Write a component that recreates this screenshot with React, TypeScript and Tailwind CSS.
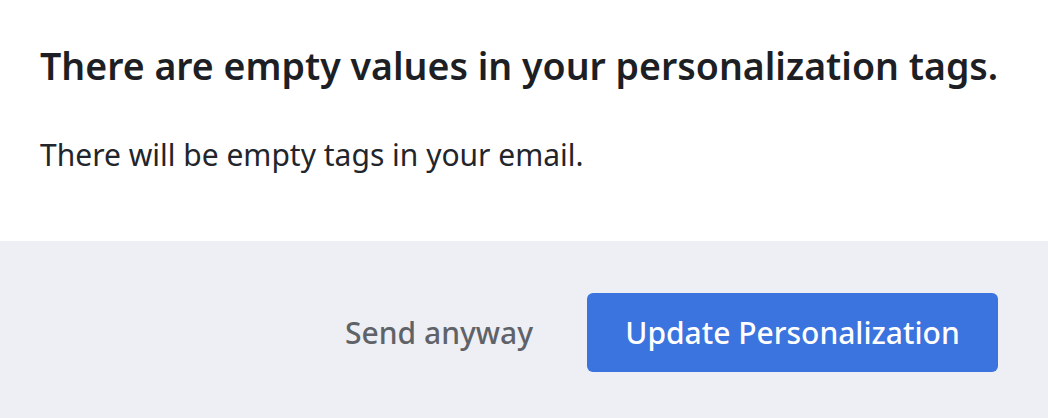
export default function App() {
  return (
    <div className="w-[1048px] h-[418px] bg-white flex flex-col font-['Noto_Sans',sans-serif]">
      <div className="h-[241px] px-10 pt-[40px]">
        <h2 className="whitespace-nowrap text-[37.5px] leading-[52px] font-semibold text-[#1d1f24]">
          There are empty values in your personalization tags.
        </h2>
        <p className="mt-[43px] text-[30px] leading-[40px] text-[#22252b]">
          There will be empty tags in your email.
        </p>
      </div>
      <div className="flex-1 bg-[#eeeff4] flex items-start justify-end gap-[54px] pr-[50px] pt-[52px]">
        <button className="h-[79px] text-[30px] font-medium text-[#5f6368]">Send anyway</button>
        <button className="h-[79px] w-[411px] rounded-[6px] bg-[#3b73df] text-white text-[30px] font-medium">
          Update Personalization
        </button>
      </div>
    </div>
  );
}
